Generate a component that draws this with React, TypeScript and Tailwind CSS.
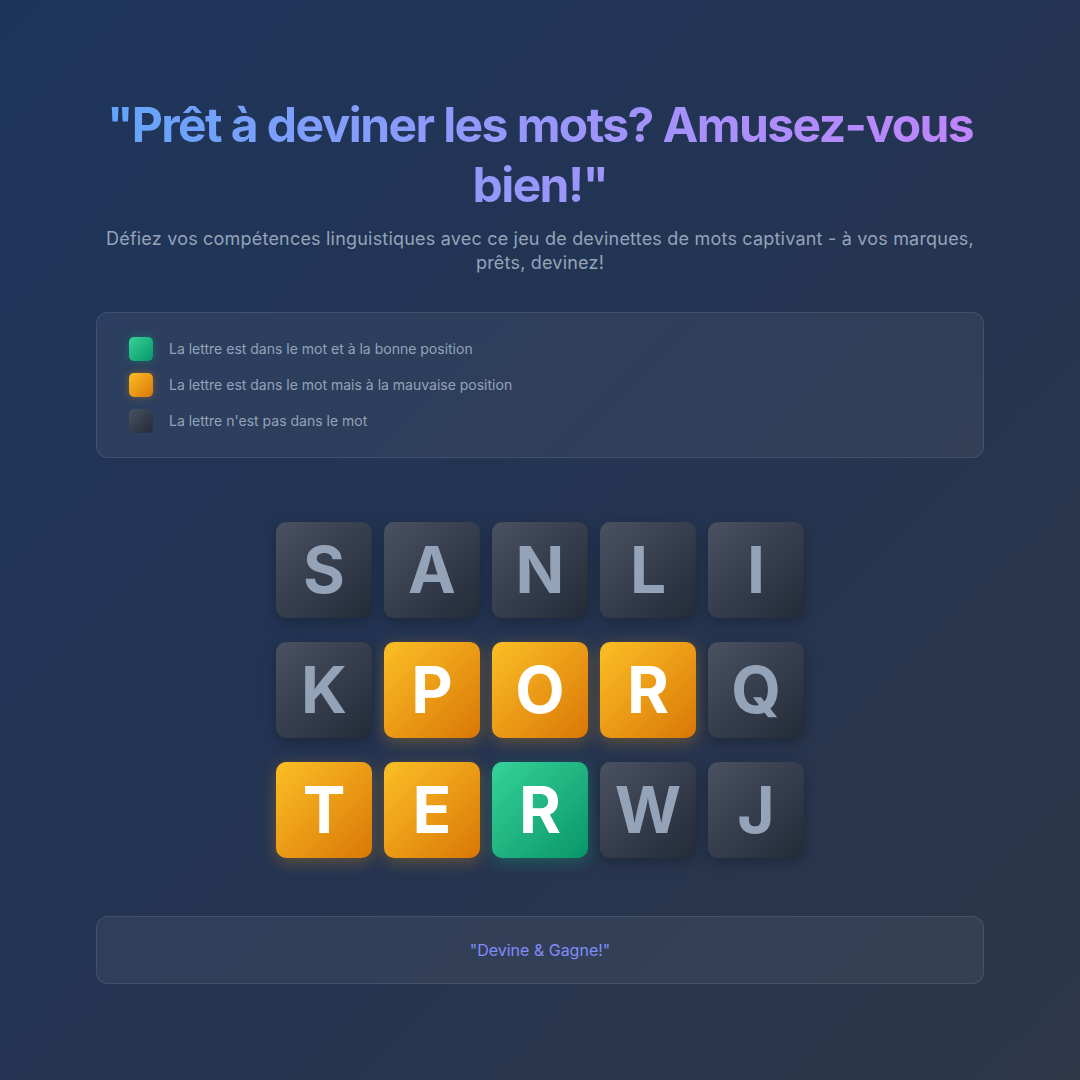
import React from 'react';

type TileState = 'absent' | 'present' | 'correct';

const rows: { letter: string; state: TileState }[][] = [
    [
        { letter: 'S', state: 'absent' },
        { letter: 'A', state: 'absent' },
        { letter: 'N', state: 'absent' },
        { letter: 'L', state: 'absent' },
        { letter: 'I', state: 'absent' },
    ],
    [
        { letter: 'K', state: 'absent' },
        { letter: 'P', state: 'present' },
        { letter: 'O', state: 'present' },
        { letter: 'R', state: 'present' },
        { letter: 'Q', state: 'absent' },
    ],
    [
        { letter: 'T', state: 'present' },
        { letter: 'E', state: 'present' },
        { letter: 'R', state: 'correct' },
        { letter: 'W', state: 'absent' },
        { letter: 'J', state: 'absent' },
    ],
];

const tileStyles: Record<TileState, string> = {
    absent: 'bg-gradient-to-br from-[#4a5262] to-[#232b39] text-[#94a3b8] shadow-[0_4px_14px_rgba(0,0,0,0.25)]',
    present: 'bg-gradient-to-br from-[#fbbf24] to-[#d97706] text-white shadow-[0_4px_16px_rgba(245,158,11,0.3)]',
    correct: 'bg-gradient-to-br from-[#34d399] to-[#059669] text-white shadow-[0_4px_16px_rgba(16,185,129,0.3)]',
};

const legend = [
    { swatch: 'bg-gradient-to-br from-[#34d399] to-[#059669] shadow-[0_0_8px_rgba(16,185,129,0.35)]', label: 'La lettre est dans le mot et à la bonne position' },
    { swatch: 'bg-gradient-to-br from-[#fbbf24] to-[#d97706] shadow-[0_0_8px_rgba(245,158,11,0.35)]', label: 'La lettre est dans le mot mais à la mauvaise position' },
    { swatch: 'bg-gradient-to-br from-[#4a5262] to-[#232b39]', label: "La lettre n'est pas dans le mot" },
];

const App: React.FC = () => {
    return (
        <div
            className="min-h-screen w-full bg-gradient-to-br from-[#1e355b] via-[#243452] to-[#2d3748] px-24 pt-[95px] pb-24"
            style={{ fontFamily: 'Inter, "Noto Sans", sans-serif' }}
        >
            {/* Header */}
            <div className="text-center">
                <h1 className="text-[48px] font-bold leading-[60px] tracking-[-1.6px] bg-gradient-to-r from-[#60a5fa] to-[#c084fc] bg-clip-text text-transparent">
                    "Prêt à deviner les mots? Amusez-vous bien!"
                </h1>
                <p className="mt-3 text-lg leading-[24px] tracking-[0.2px] text-[#94a3b8]">
                    Défiez vos compétences linguistiques avec ce jeu de devinettes de mots captivant - à vos marques, prêts, devinez!
                </p>
            </div>

            {/* Legend */}
            <div className="mt-[37px] rounded-xl border border-white/10 bg-white/5 px-8 py-6">
                <div className="flex flex-col gap-3">
                    {legend.map(item => (
                        <div key={item.label} className="flex items-center gap-4">
                            <div className={`h-6 w-6 rounded-[5px] ${item.swatch}`} />
                            <span className="text-sm text-[#94a3b8]">{item.label}</span>
                        </div>
                    ))}
                </div>
            </div>

            {/* Board */}
            <div className="mt-16 flex flex-col items-center gap-6">
                {rows.map((row, i) => (
                    <div key={i} className="flex gap-3">
                        {row.map((tile, j) => (
                            <div
                                key={j}
                                className={`flex h-24 w-24 items-center justify-center rounded-[10px] text-[64px] font-bold ${tileStyles[tile.state]}`}
                            >
                                {tile.letter}
                            </div>
                        ))}
                    </div>
                ))}
            </div>

            {/* Footer */}
            <div className="mt-[58px] flex h-[68px] items-center justify-center rounded-xl border border-white/10 bg-white/5">
                <span className="text-base text-[#818cf8]">"Devine &amp; Gagne!"</span>
            </div>
        </div>
    );
};

export default App;
